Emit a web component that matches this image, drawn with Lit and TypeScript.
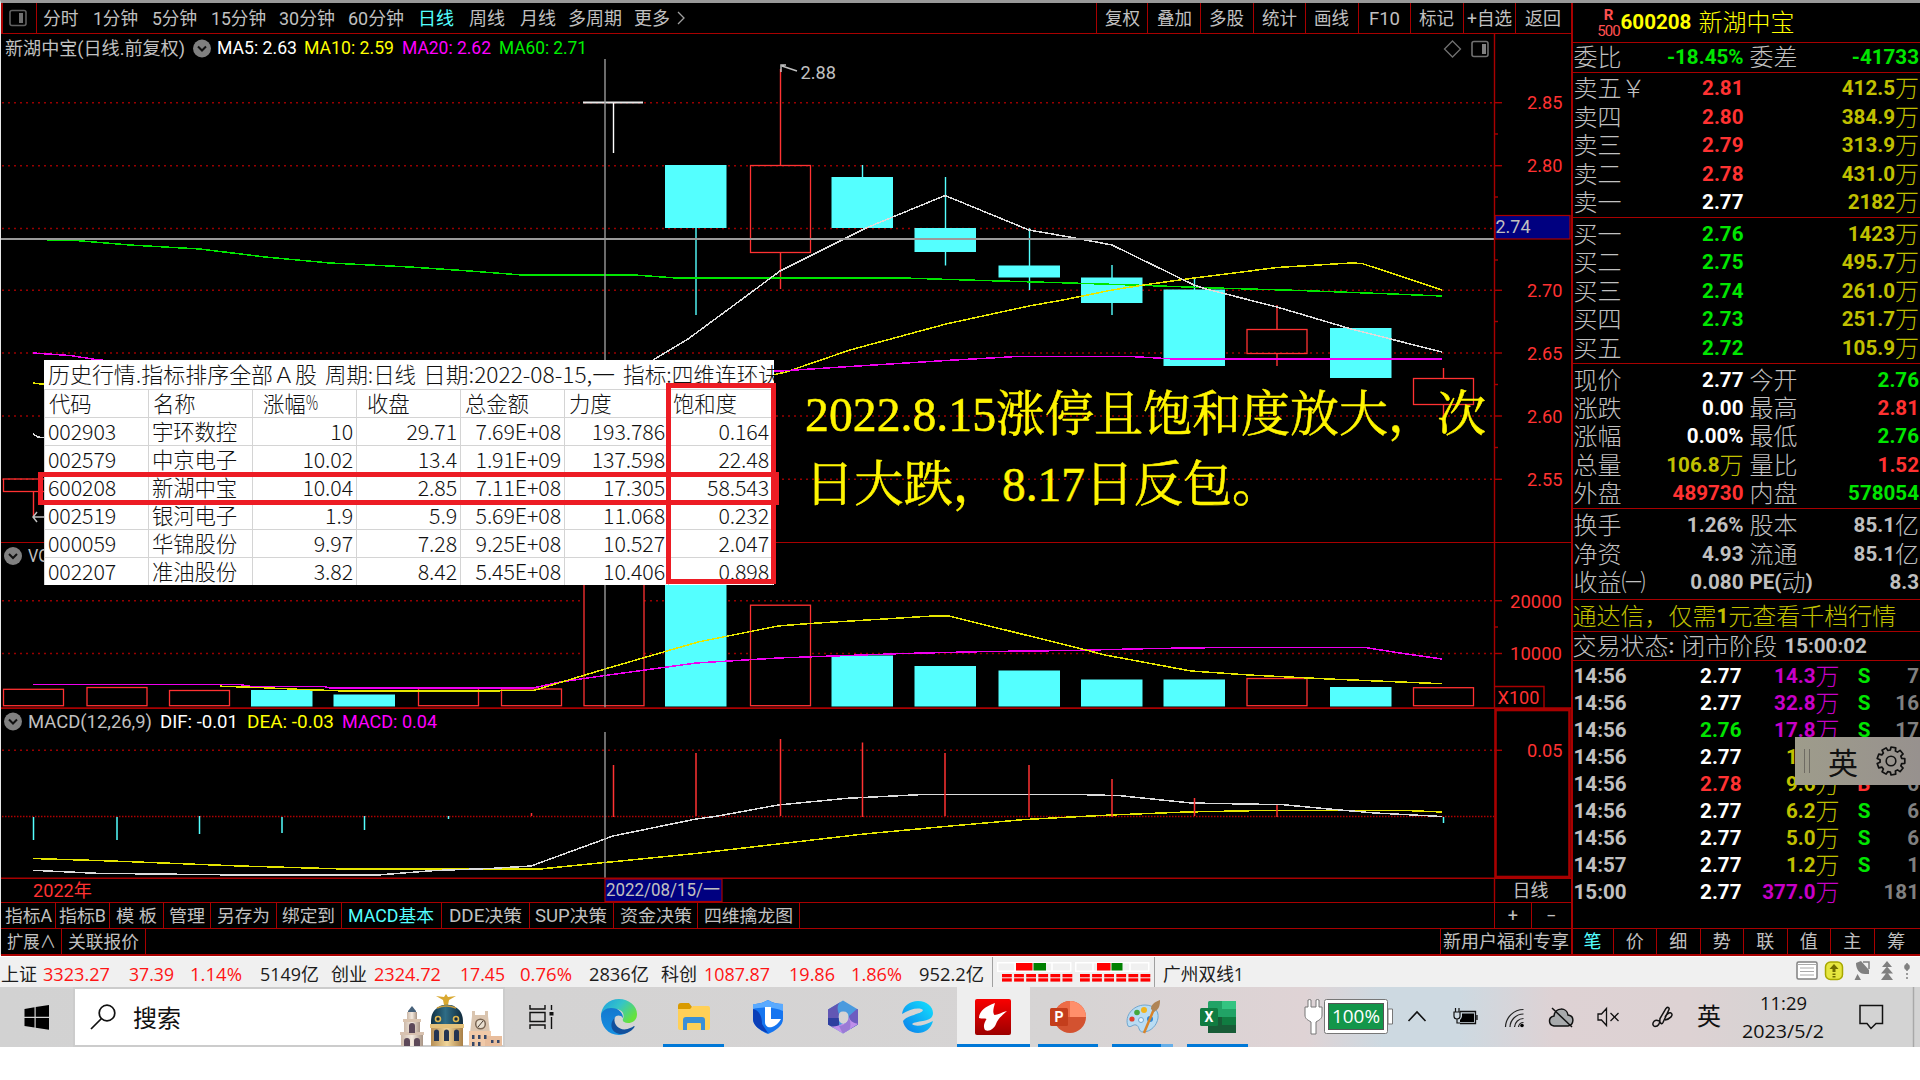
import { LitElement, html, svg, css, nothing } from "lit";
import { customElement } from "lit/decorators.js";

type Pt = [number, number];

const fit = (s: string, w: number, size = 18, cls = "") => html`
  <svg class="fit ${cls}" width=${w} height=${size + 6}>
    <text x="0" y=${size * 0.87 + 3} font-size=${size} textLength=${w} lengthAdjust="spacingAndGlyphs">${s}</text>
  </svg>`;

const t = (x: number, y: number, s: string, w: number, fill: string, size = 18) => svg`
  <text x=${x} y=${y} font-size=${size} fill=${fill} textLength=${w} lengthAdjust="spacingAndGlyphs">${s}</text>`;

const line = (pts: Pt[], color: string) =>
  svg`<polyline points=${pts.map((p) => p.join(",")).join(" ")} fill="none" stroke=${color} stroke-width="1.5" shape-rendering="crispEdges" />`;

const seg = (x1: number, y1: number, x2: number, y2: number, color: string, w = 1.4) =>
  svg`<line x1=${x1} y1=${y1} x2=${x2} y2=${y2} stroke=${color} stroke-width=${w} />`;

const RED = "#ff3232", CYAN = "#54ffff", FRAME = "#a80000", GREY = "#c0c0c0", CROSS = "#9a9a9a";
const YEL = "#e6e600", MAG = "#f000f0", GRN = "#00e600", WHT = "#dcdcdc";

const grid = (y: number) => svg`<line x1="2" x2="1494" y1=${y} y2=${y} class="dots" />`;
const tick = (y: number, w = 8) => seg(1494, y, 1494 + w, y, FRAME);

interface Candle { x: number; top: number; bottom: number; high: number; low: number; up?: boolean }
const CANDLES: Candle[] = [
  { x: 33.5, top: 479, bottom: 491.5, high: 479, low: 516, up: true },
  { x: 696, top: 165, bottom: 228, high: 165, low: 315 },
  { x: 780.5, top: 165.5, bottom: 252.5, high: 69, low: 289, up: true },
  { x: 862.5, top: 177, bottom: 228, high: 165, low: 228 },
  { x: 945.5, top: 228, bottom: 252, high: 177, low: 265.5 },
  { x: 1029.5, top: 265.5, bottom: 277.5, high: 228, low: 290 },
  { x: 1112, top: 277.5, bottom: 303, high: 265, low: 315 },
  { x: 1194.5, top: 289.5, bottom: 366, high: 278, low: 366 },
  { x: 1277, top: 329.5, bottom: 353.5, high: 305, low: 366, up: true },
  { x: 1361, top: 328, bottom: 378, high: 328, low: 378 },
  { x: 1443.5, top: 378.5, bottom: 404.5, high: 368, low: 427, up: true },
];
const candle = (c: Candle) => c.up
  ? svg`${seg(c.x, c.high, c.x, c.top, RED)}${seg(c.x, c.bottom, c.x, c.low, RED)}
      <rect x=${c.x - 30} y=${c.top} width="60" height=${c.bottom - c.top} fill="none" stroke=${RED} stroke-width="1.3" />`
  : svg`${seg(c.x, c.high, c.x, c.low, CYAN)}
      <rect x=${c.x - 31} y=${c.top} width="61.5" height=${c.bottom - c.top} fill=${CYAN} />`;

const VOLUMES: [number, number, boolean][] = [
  [33.5, 689.3, true], [117, 687.5, true], [199.5, 690.5, true], [282, 690, false], [364.5, 694.5, false],
  [448.5, 688.5, true], [531.5, 689, true], [614, 560, true], [696, 548, false], [780.5, 605.2, true],
  [862.5, 655.5, false], [945.5, 666, false], [1029.5, 670.5, false], [1112, 679.5, false], [1194.5, 679.5, false],
  [1277, 678.5, true], [1361, 687, false], [1443.5, 687.7, true],
];

const BARS: [number, number, number, boolean][] = [
  [33.5, 817, 840, false], [117, 817, 840, false], [199.5, 816, 834, false], [282, 817, 833, false],
  [364.5, 816, 830, false], [448.5, 816, 819, false], [531.5, 813, 816, true], [613.5, 765, 817, true],
  [696, 753, 816, true], [780.5, 739, 816, true], [862.5, 742.5, 817, true], [945, 753, 816, true],
  [1029, 765, 817, true], [1112, 779, 817, true], [1194.5, 798, 816, true], [1277, 805, 817, true], [1443.5, 817, 823, false],
];

const dropdown = (x: number, y: number) => svg`
  <circle cx=${x} cy=${y} r="9" fill="#808080" />
  <path d="M${x - 4} ${y - 2}l4 4 4-4" fill="none" stroke="#101010" stroke-width="2" />`;

const periods: [string, number, number][] = [
  ["分时", 35.5, 14], ["1分钟", 45, 14], ["5分钟", 45, 14], ["15分钟", 55, 13.5], ["30分钟", 56, 13], ["60分钟", 56, 13.5],
  ["日线", 36, 15], ["周线", 36, 15], ["月线", 36, 12.5], ["多周期", 54, 12], ["更多", 36, 0],
];
const actions: [string, number, number][] = [
  ["复权", 51, 35], ["叠加", 53, 35], ["多股", 52.5, 35], ["统计", 52.5, 35], ["画线", 52.5, 35],
  ["F10", 52.5, 31], ["标记", 52.5, 35], ["+自选", 52.5, 45], ["返回", 55.5, 36],
];
const tabs: [string, number, number][] = [
  ["指标A", 55, 47], ["指标B", 54, 47], ["模 板", 54, 41], ["管理", 47, 36], ["另存为", 65.5, 53], ["绑定到", 65.5, 53],
  ["MACD基本", 99.5, 86], ["DDE决策", 88, 73], ["SUP决策", 84.5, 72], ["资金决策", 84, 72], ["四维擒龙图", 101.5, 89],
];

const book: [string, string, string, string][][] = [
  [["卖五￥", "2.81", "r", "412.5万"], ["卖四", "2.80", "r", "384.9万"], ["卖三", "2.79", "r", "313.9万"], ["卖二", "2.78", "r", "431.0万"], ["卖一", "2.77", "w", "2182万"]],
  [["买一", "2.76", "g", "1423万"], ["买二", "2.75", "g", "495.7万"], ["买三", "2.74", "g", "261.0万"], ["买四", "2.73", "g", "251.7万"], ["买五", "2.72", "g", "105.9万"]],
];
const facts: [string, string, string, string, string, string][][] = [
  [["现价", "2.77", "w", "今开", "2.76", "g"], ["涨跌", "0.00", "w", "最高", "2.81", "r"], ["涨幅", "0.00%", "w", "最低", "2.76", "g"],
   ["总量", "106.8万", "y", "量比", "1.52", "r"], ["外盘", "489730", "r", "内盘", "578054", "g"]],
  [["换手", "1.26%", "s", "股本", "85.1亿", "s"], ["净资", "4.93", "s", "流通", "85.1亿", "s"], ["收益㈠", "0.080", "s", "PE(动)", "8.3", "s"]],
];
const deals: [string, string, string, string, string, string, string][] = [
  ["14:56", "2.77", "w", "14.3万", "m", "S", "7"], ["14:56", "2.77", "w", "32.8万", "m", "S", "16"], ["14:56", "2.76", "g", "17.8万", "m", "S", "17"],
  ["14:56", "2.77", "w", "1.4万", "y", "S", "6"], ["14:56", "2.78", "r", "9.6万", "y", "B", "6"], ["14:56", "2.77", "w", "6.2万", "y", "S", "6"],
  ["14:56", "2.77", "w", "5.0万", "y", "S", "6"], ["14:57", "2.77", "w", "1.2万", "y", "S", "1"], ["15:00", "2.77", "w", "377.0万", "m", "", "181"],
];

/* Digits are set bold and narrow, Chinese units light and large. */
const mixed = (s: string) =>
  s.split(/([\u3000-\u9fff\uff00-\uffef]+)/).filter(Boolean)
    .map((p) => (/[\u3000-\u9fff\uff00-\uffef]/.test(p) ? html`<span class="cn">${p}</span>` : html`<span class="num">${p}</span>`));

const sheet: string[][] = [
  ["002903", "宇环数控", "10", "29.71", "7.69E+08", "193.786", "0.164"],
  ["002579", "中京电子", "10.02", "13.4", "1.91E+09", "137.598", "22.48"],
  ["600208", "新湖中宝", "10.04", "2.85", "7.11E+08", "17.305", "58.543"],
  ["002519", "银河电子", "1.9", "5.9", "5.69E+08", "11.068", "0.232"],
  ["000059", "华锦股份", "9.97", "7.28", "9.25E+08", "10.527", "2.047"],
  ["002207", "准油股份", "3.82", "8.42", "5.45E+08", "10.406", "0.898"],
];

const indices: [string, number, number, boolean][] = [
  ["上证", 36, 6, false], ["3323.27", 67, 19, true], ["37.39", 45, 16, true], ["1.14%", 52, 18, true], ["5149亿", 59, 11.5, false],
  ["创业", 36, 7, false], ["2324.72", 67, 19, true], ["17.45", 45, 15.5, true], ["0.76%", 52, 17, true], ["2836亿", 60, 12, false],
  ["科创", 36, 7, false], ["1087.87", 66, 19, true], ["19.86", 46, 16, true], ["1.86%", 51, 17, true], ["952.2亿", 65, 0, false],
];

@customElement("app-root")
export class AppRoot extends LitElement {
  static styles = css`
    :host { display: block; width: 1920px; height: 1080px; overflow: hidden; background: #fff;
      font-family: Roboto, "Noto Sans CJK SC", sans-serif; font-size: 18px; line-height: 1; color: #c0c0c0; }
    * { box-sizing: border-box; }
    svg { display: block; flex: none; }
    svg text { font-family: Roboto, "Noto Sans CJK SC", sans-serif; font-weight: 400; }
    .fit { overflow: visible; }
    .fit text { fill: currentColor; }
    .window { display: flex; flex-direction: column; height: 955px; border-top: 3px solid #999; border-left: 1px solid #e8e8e8; background: #000; }
    .body { display: grid; grid-template-columns: 1569.5px 1fr; flex: 1; }
    .left { display: flex; flex-direction: column; }
    .bar { display: flex; align-items: center; height: 31px; border-bottom: 1.5px solid #a80000; border-left: 2px solid #a80000; }
    .panelbtn { display: flex; align-items: center; justify-content: center; width: 34px; height: 100%; border-right: 1.5px solid #a80000; padding-right: 3px; }
    .periods { display: flex; flex: 1; padding-left: 6px; align-items: center; }
    .on { color: #54ffff; }
    .cell { display: flex; align-items: center; justify-content: center; height: 100%; border-left: 1.5px solid #a80000; flex: none; }
    .charts { position: relative; height: 868px; }
    .dots { stroke: #980000; stroke-width: 1.4; stroke-dasharray: 2 4; }
    .zero { stroke: #b00000; stroke-width: 1.4; stroke-dasharray: 1.5 1.5; }
    .row { display: flex; height: 26px; border-top: 1.5px solid #a80000; }
    .row .cell { border-left: 0; border-right: 1.5px solid #a80000; }
    .row.ext { height: 28px; border-bottom: 2px solid #a80000; }
    .grow { flex: 1; }

    .side { border-left: 2px solid #a80000; display: flex; flex-direction: column; }
    .stock { display: flex; height: 40px; align-items: center; padding: 0 0 2px 24px; border-bottom: 1.5px solid #a80000; color: #ff0; }
    .badge { width: 24px; color: #ff5050; text-align: center; font-size: 15px; display: flex; flex-direction: column; gap: 1px; align-items: center; font-weight: 700; padding-top: 3px; }
    .badge i { font-style: normal; font-weight: 400; font-size: 15px; letter-spacing: -1px; }
    .num { font: 700 20.6px/26px Roboto, sans-serif; }
    .cn { font: 300 24px/24px "Noto Sans CJK SC", sans-serif; margin-top: -2px; }
    .group { border-bottom: 1.5px solid #a80000; padding: 1.5px 0 0; flex: none; height: 145.6px; }
    .group.top { height: 29.7px; padding: 0; }
    .group.short { height: 91px; }
    .line { display: grid; grid-template-columns: 170px 6px 84px 1fr; height: 28.45px; align-items: center; padding-left: 1px; padding-right: 1px; white-space: nowrap; }
    .line > div, .deal > div { display: flex; align-items: center; }
    .line span { display: flex; align-items: center; }
    .pair { justify-content: space-between; }
    .end { justify-content: flex-end; }
    .r { color: #ff3232; } .g { color: #00e600; } .w { color: #fff; } .y { color: #c0c000; } .m { color: #c800c8; } .s { color: #c0c0c0; }
    .promo { height: 31.7px; display: flex; align-items: center; border-bottom: 1.5px solid #a80000; color: #c0c000; white-space: nowrap; flex: none; }
    .phase { height: 28.7px; display: flex; align-items: center; border-bottom: 1.5px solid #a80000; white-space: nowrap; flex: none; }
    .gap { width: 7px; }
    .deals { padding-top: 1.2px; flex: 1; }
    .deal { display: grid; grid-template-columns: 168px 98px 18px 13px 1fr; height: 27px; padding: 0 1px 0 1px; }
    .deal .side-mark { justify-content: flex-end; }
    .dim { color: #808080; }
    .foot { display: flex; height: 28px; border-top: 1.5px solid #a80000; border-bottom: 2px solid #a80000; }
    .foot div { width: 43.5px; display: flex; align-items: center; justify-content: center; border-right: 1.5px solid #a80000; flex: none; font-weight: 400; }
    .foot div:first-child { width: 41px; }
    .foot div:last-child { border-right: 0; }

    .sheet { position: absolute; left: 43px; top: 326px; width: 730px; height: 225px; background: #fff; color: #111; overflow: hidden;
      font: 300 21.4px/28px "Noto Sans CJK SC", sans-serif; }
    .sheet svg text { font-family: "Noto Sans CJK SC", sans-serif; font-weight: 300; }
    .title { height: 28.5px; display: flex; align-items: center; padding-left: 4px; gap: 7.5px; }
    .cells { display: grid; grid-template-columns: repeat(7, 104px); grid-auto-rows: 28px; border-left: 1.5px solid #d4d4d4; }
    .cells div { border-top: 1.5px solid #d4d4d4; border-right: 1.5px solid #d4d4d4; padding: 0 3px; text-align: right; white-space: nowrap; line-height: 26px; letter-spacing: -0.1px; }
    .cells .l { text-align: left; }
    .cells .h { text-align: left; padding-left: 10px; display: flex; }
    .cells .h0 { padding-left: 4px; }
    .mark { position: absolute; border: 5px solid #ed1c24; }
    .mark-row { left: 37px; top: 438px; width: 741px; height: 33px; }
    .mark-col { left: 665px; top: 348.5px; width: 110px; height: 201.5px; }
    .note { position: absolute; left: 804px; top: 352px; color: #fff500; display: flex; flex-direction: column; gap: 15.5px; }
    .note div { display: flex; }
    .note svg text { font-family: "Liberation Serif", "Noto Serif CJK SC", "Noto Sans CJK SC", serif; stroke: currentColor; stroke-width: 0.5px; }
    .ime { position: absolute; left: 1795px; top: 737px; width: 125px; height: 48px; background: linear-gradient(90deg, #9e9c8b, #97918e); color: #111;
      display: flex; align-items: center; padding-left: 9px; font: 400 30px/48px "Noto Sans CJK SC", sans-serif; }
    .grip { width: 6px; height: 24px; border: solid #6e6b62; border-width: 0 1.5px; margin-right: 18px; }
    .ime svg { margin-left: 18px; }

    .status { height: 32px; background: #f0f0f0; border-top: 2px solid #fff; display: flex; align-items: center; color: #1c1c1c; padding-top: 4px; }
    .status .fit text { font-family: "Open Sans", "Noto Sans CJK SC", sans-serif; font-weight: 400; }
    .up { color: #ff1414; }
    .status .rule { width: 1.5px; height: 30px; background: #a0a0a0; margin-top: -4px; }
    .tools { margin-left: auto; margin-right: 9px; margin-top: -7px; }

    .taskbar { height: 60px; display: flex; background: linear-gradient(90deg, #d2d2d2 0, #d6d4d4 55%, #dfd3d5 68%, #cdd9e1 72%, #cdd9e1 76%, #ded2d4 81%, #ddd2d3 88%, #d3d3d3 95%); color: #111; }
    .start { width: 73px; display: flex; align-items: center; padding-left: 24px; }
    .search { width: 432px; background: #fff; border: 2px solid #ccc; display: flex; align-items: center; padding-left: 15px; }
    .search span { margin: 0 0 0 17px; font: 400 24px/30px "Noto Sans CJK SC", sans-serif; flex: 1; }
    .search .sky { margin: 5px 1px 0 0; }
    .taskview { width: 73px; display: flex; align-items: center; justify-content: center; }
    .app { width: 74.9px; display: flex; align-items: center; justify-content: center; position: relative; flex: none; }
    .app.run::after { content: ""; position: absolute; bottom: 0; left: 7px; right: 7px; height: 3px; background: #0078d7; }
    .app.multi::after { background: linear-gradient(90deg, #0078d7 80%, #66aee8 80%); }
    .app.active { background: #eee; width: 73px; margin: 0 0.95px; }
    .app.active::after { left: 0; right: 0; }
    .tray { margin-left: auto; display: flex; }
    .clock text { font-family: "Open Sans", "Noto Sans CJK SC", sans-serif; font-weight: 400; }
  `;

  private head() {
    return html`<div class="bar">
      <div class="panelbtn"><svg width="18" height="18"><rect x="1" y="1.5" width="16" height="15" rx="2" fill="none" stroke="#606060" stroke-width="1.6"/><rect x="10" y="4" width="4" height="10" fill="#707070"/></svg></div>
      <div class="periods">
        ${periods.map(([s, w, g]) => html`${fit(s, w, 18, s === "日线" ? "on" : "")}<div style="width:${g}px"></div>`)}
        <svg width="18" height="18"><path d="M8 3l6 6-6 6" fill="none" stroke="#a0a0a0" stroke-width="1.3"/></svg>
      </div>
      ${actions.map(([s, w, tw]) => html`<div class="cell" style="width:${w}px">${fit(s, tw)}</div>`)}
    </div>`;
  }

  private price() {
    return html`<svg width="1570" height="509" viewBox="1 34 1570 509">
      ${[102.7, 165.7, 228.5, 290.3, 353, 416, 479.3].map((y) => svg`${grid(y)}${tick(y)}`)}
      ${[134, 197, 260, 321.5, 384.5, 447.5].map((y) => tick(y, 4))}
      ${CANDLES.map(candle)}
      ${seg(583, 102.5, 643, 102.5, "#e8e8e8", 1.8)}${seg(613.5, 103, 613.5, 153, "#fff")}
      ${line([[47, 240], [76, 240.5], [130, 245], [200, 249], [265, 257], [330, 263], [410, 267], [470, 271], [522, 275], [634, 275], [677, 278], [903, 278], [966, 280], [1070, 283], [1132, 285], [1215, 288], [1300, 290.5], [1380, 293.5], [1442, 296]], GRN)}
      ${line([[33, 383], [50, 385]], YEL)}
      ${line([[768, 376], [786, 372], [850, 350], [946, 324], [1029, 306], [1063, 300], [1112, 290], [1147, 284.5], [1194, 278], [1234, 273], [1277, 267.5], [1351, 263], [1362, 263.5], [1400, 276], [1442, 290]], YEL)}
      ${line([[33, 353], [70, 355.5], [96, 359.5], [110, 361]], MAG)}
      ${line([[768, 371.5], [780, 371], [850, 366.5], [946, 360.5], [1017, 356.5], [1131, 356.5], [1174, 359], [1442, 359]], MAG)}
      ${line([[653, 360], [688, 339], [741, 300], [780, 271], [866, 228], [945, 195.5], [1029, 230], [1075, 238], [1112, 245], [1194, 285], [1206, 289], [1277, 307], [1351, 329], [1442, 352]], WHT)}
      ${line([[33, 434], [38, 437], [46, 438]], WHT)}
      <path d="M46 517H33M37 512l-4 5 4 5M797 71l-15-5M781 72v-7h5" fill="none" stroke=${GREY} stroke-width="1.5" />
      ${seg(1, 239, 1494, 239, CROSS, 1.8)}${seg(605, 59, 605, 543, CROSS)}
      ${t(800.5, 79, "2.88", 35.5, GREY)}
      <rect x="1495" y="215.5" width="75" height="23.5" fill="#000080" stroke=${FRAME} stroke-width="1.2" />
      ${t(1495.5, 232.5, "2.74", 35, GREY)}
      ${([["2.85", 109], ["2.80", 172], ["2.70", 297], ["2.65", 360], ["2.60", 423], ["2.55", 485.5]] as [string, number][]).map(([s, y]) => t(1527, y, s, 35.5, RED))}
      ${seg(1494.5, 34, 1494.5, 543, FRAME)}${seg(1, 542.8, 1571, 542.8, FRAME, 1.8)}
      ${t(5, 54.5, "新湖中宝(日线.前复权)", 180, GREY)}${dropdown(202, 48.5)}
      ${t(217, 54, "MA5: 2.63", 80, "#fff")}${t(304, 54, "MA10: 2.59", 90, "#ff0")}${t(402, 54, "MA20: 2.62", 89, "#f0f")}${t(499, 54, "MA60: 2.71", 88, "#00f000")}
      <path d="M1452.5 41l8 8-8 8-8-8z" fill="none" stroke="#707070" stroke-width="1.3" />
      <rect x="1472" y="41.5" width="16" height="15" rx="2" fill="none" stroke="#707070" stroke-width="1.6" /><rect x="1482" y="44" width="4" height="10" fill="#808080" />
    </svg>`;
  }

  private volume() {
    return html`<svg width="1570" height="166" viewBox="1 543 1570 166">
      ${[600.7, 653.5].map((y) => svg`${grid(y)}${tick(y)}`)}${tick(627, 4)}
      ${VOLUMES.map(([x, y, up]) => up
        ? svg`<rect x=${x - 30} y=${y} width="60" height=${705.7 - y} fill="#000" stroke=${RED} stroke-width="1.3" />`
        : svg`<rect x=${x - 31} y=${y} width="61.5" height=${706.5 - y} fill=${CYAN} />`)}
      ${line([[33, 684.5], [240, 684.5], [250, 686.3], [323, 686.3], [330, 688], [533, 688], [560, 682], [605, 675.5], [696, 663], [778, 658], [833, 656], [904, 653.5], [988, 651.5], [1070, 650.5], [1154, 648.5], [1237, 647.3], [1364, 647.3], [1400, 653], [1442, 659]], MAG)}
      ${line([[220, 686.2], [263, 687.7], [303, 689.5], [345, 691], [533, 690.7], [605, 669], [698, 642], [778, 626], [810, 623.5], [933, 616], [949, 616], [1082, 649], [1105, 655], [1191, 671], [1249, 675], [1329, 679], [1442, 683.7]], YEL)}
      ${seg(605, 543, 605, 708, CROSS)}
      ${dropdown(13, 556)}${t(28, 562, "VOL", 30, GREY)}
      ${t(1510, 607.5, "20000", 52, RED)}${t(1510, 660, "10000", 52, RED)}
      <path d="M1494 686.5H1544V708" fill="none" stroke=${FRAME} stroke-width="1.4" />
      ${t(1497.5, 703.5, "X100", 42, RED)}
      ${seg(1494.5, 543, 1494.5, 709, FRAME)}${seg(1, 708.2, 1571, 708.2, FRAME, 2)}
    </svg>`;
  }

  private macd() {
    return html`<svg width="1570" height="193" viewBox="1 709 1570 193">
      ${grid(750.3)}<line x1="2" x2="1494" y1="816.5" y2="816.5" class="zero" />
      ${line([[33, 858.5], [97, 860.5], [138, 862], [240, 866], [345, 869], [540, 869], [600, 863], [696, 853.5], [778, 844], [864, 834], [945, 826.5], [1025, 819.5], [1071, 817], [1111, 815], [1186, 812], [1272, 810.3], [1401, 810.3], [1442, 812]], YEL)}
      ${line([[33, 870.3], [97, 873.3], [240, 875], [378, 875], [435, 870.5], [490, 868.5], [531, 866], [605, 839], [613, 836], [696, 819], [715, 816.5], [778, 805], [847, 798.3], [927, 794.3], [1071, 794.3], [1120, 795.7], [1191, 803], [1283, 804.7], [1329, 809], [1375, 813], [1442, 816.5]], WHT)}
      ${BARS.map(([x, a, b, up]) => seg(x, a, x, b, up ? RED : CYAN, 1.5))}
      ${seg(605, 732, 605, 878, CROSS)}
      ${dropdown(13, 721.5)}
      ${t(28, 727.5, "MACD(12,26,9)", 124, GREY)}${t(160, 727.5, "DIF: -0.01", 78, "#fff")}${t(247, 727.5, "DEA: -0.03", 87, "#ff0")}${t(342, 727.5, "MACD: 0.04", 95, "#f0f")}
      <rect x="1495.5" y="710" width="74" height="167" fill="none" stroke=${FRAME} stroke-width="2.6" />
      ${tick(750.3)}${t(1527, 757, "0.05", 35.5, RED)}
      ${seg(1, 878.3, 1571, 878.3, FRAME, 1.6)}${seg(1494.5, 878, 1494.5, 902, FRAME)}
      ${t(33, 897, "2022年", 59, RED)}
      <rect x="605" y="879" width="117" height="22.5" fill="#000080" stroke=${FRAME} stroke-width="1.2" />
      ${t(606, 895.5, "2022/08/15/一", 114, GREY)}
      ${t(1512.5, 896.5, "日线", 36, GREY)}
    </svg>`;
  }

  private overlay() {
    return html`<div class="sheet">
        <div class="title">${fit("历史行情.指标排序全部Ａ股", 269, 21.4)}${fit("周期:日线", 91, 21.4)}${fit("日期:2022-08-15,一", 192, 21.4)}${fit("指标:四维连环诀", 157, 21.4)}</div>
        <div class="cells">
          ${["代码", "名称", "涨幅%", "收盘", "总金额", "力度", "饱和度"].map((s, i) => html`<div class="h ${[0, 1, 4, 5, 6].includes(i) ? "h0" : ""}">${i === 2 ? html`涨幅${fit("%", 12, 20)}` : s}</div>`)}
          ${sheet.flatMap((r) => r.map((c, i) => html`<div class=${i < 2 ? "l" : ""}>${c}</div>`))}
        </div>
      </div>
      <div class="mark mark-col"></div><div class="mark mark-row"></div>
      <div class="note">
        <div>${fit("2022.8.15", 191, 48.5)}${fit("涨停且饱和度放大，次", 490, 48.5)}</div>
        <div>${fit("日大跌，", 197, 48.5)}${fit("8.17", 83, 48.5)}${fit("日反包。", 196, 48.5)}</div>
      </div>`;
  }

  private side() {
    return html`<div class="side">
      <div class="stock"><span class="badge">R<i>500</i></span><span class="num">600208</span><span class="gap"></span><span class="cn">新湖中宝</span></div>
      <div class="group top"><div class="line"><div class="pair"><span class="cn">委比</span><span class="num g">-18.45%</span></div><i></i><div class="cn">委差</div><div class="end num g">-41733</div></div></div>
      ${book.map((g) => html`<div class="group">${g.map(([a, p, c, v]) => html`<div class="line"><div class="pair"><span class="cn">${a}</span><span class="num ${c}">${p}</span></div><i></i><i></i><div class="end y">${mixed(v)}</div></div>`)}</div>`)}
      ${facts.map((g, k) => html`<div class="group ${k ? "short" : ""}">${g.map(([a, p, c, b, q, d]) => html`<div class="line"><div class="pair"><span class="cn">${a}</span><span class=${c}>${mixed(p)}</span></div><i></i><div>${mixed(b)}</div><div class="end ${d}">${mixed(q)}</div></div>`)}</div>`)}
      <div class="promo">${mixed("通达信，仅需1元查看千档行情")}</div>
      <div class="phase">${mixed("交易状态:")}<span class="gap"></span>${mixed("闭市阶段")}<span class="gap"></span>${mixed("15:00:02")}</div>
      <div class="deals">${deals.map(([a, p, c, v, vc, s, n]) => html`<div class="deal"><div class="pair"><span class="num">${a}</span><span class="num ${c}">${p}</span></div><div class="end ${vc}">${mixed(v)}</div><i></i><div class="side-mark num ${s === "B" ? "r" : "g"}">${s || nothing}</div><div class="end num dim">${n}</div></div>`)}</div>
      <div class="foot">${["笔", "价", "细", "势", "联", "值", "主", "筹"].map((s, i) => html`<div class=${i ? "" : "on"}>${s}</div>`)}</div>
    </div>`;
  }

  private leds(rx: number, rw: number, gw: number) {
    return svg`
      <rect x="0.7" y="0.7" width="73" height="8.5" fill="#f0f0f0" stroke="#fff" stroke-width="1.5" />
      <path d="M18 0v9M55 0v9" stroke="#fff" stroke-width="1.5" />
      <rect x=${rx} y="1" width=${rw} height="7.5" fill="#f00" /><rect x=${rx + rw + 1} y="1" width=${gw} height="7.5" fill="#008000" />
      ${[0, 1, 2, 3, 4, 5].map((i) => svg`<rect x=${5 + i * 12.1} y="12" width="9.8" height="3.3" fill="#f00" /><rect x=${5 + i * 12.1} y="16.3" width="9.8" height="3.3" fill="#f00" />`)}`;
  }

  private status() {
    return html`<div class="status">
      <div style="width:1px"></div>
      ${indices.map(([s, w, g, up]) => html`${fit(s, w, 18, up ? "up" : "")}<div style="width:${g}px"></div>`)}
      <div style="width:7.500px"></div><div class="rule"></div><div style="width:3.500px"></div>
      <svg width="154" height="20" style="margin-top:-5px">${this.leds(19, 16.5, 12.5)}<g transform="translate(78 0)">${this.leds(22, 13.5, 11)}</g></svg>
      <div class="rule" style="margin-left:3px"></div><div style="width:7.500px"></div>${fit("广州双线1", 81, 18)}
      <svg class="tools" width="116" height="21" viewBox="1795 961 116 21">
        <rect x="1797" y="963" width="20" height="17" rx="1.5" fill="#fff" stroke="#808080" stroke-width="1.5"/><path d="M1797 965.5h20M1800 969h14M1800 972.5h14M1800 976h14" stroke="#aaa" stroke-width="1"/>
        <rect x="1825.5" y="963" width="17" height="17.5" rx="5" fill="#e6e640" stroke="#a8a800" stroke-width="1.5"/><path d="M1834 965l-4.5 5h3v3h3v-3h3z M1832.5 974.5h3v1.5h-3zM1832.5 977h3v1.5h-3z" fill="#706c00"/>
        <path d="M1856 964l5-2 8 9v4h-4c-6 0-9-5-9-11zM1854.500 981l3-6 3.500 6z" fill="#808080"/><path d="M1863 963h6v7" fill="none" stroke="#808080" stroke-width="1.500"/>
        <path d="M1887 962l5 6h-10zM1887 967.500l6 7h-12zM1887 973l6 8h-12z" fill="#808080"/>
        <path d="M1907 964v8M1907 974v2M1907 978v2" stroke="#808080" stroke-width="1.5"/><ellipse cx="1907" cy="968" rx="2.800" ry="3" fill="#808080"/>
      </svg>
    </div>`;
  }

  private skyline() {
    return html`<svg class="sky" width="103" height="53" viewBox="398 994 103 53">
      <defs>
        <linearGradient id="dome" x1="0" x2="1"><stop offset="0" stop-color="#0f2f42"/><stop offset=".45" stop-color="#2f6d86"/><stop offset="1" stop-color="#102a3c"/></linearGradient>
        <linearGradient id="stone" x1="0" x2="1"><stop offset="0" stop-color="#b78f55"/><stop offset=".5" stop-color="#f0d59a"/><stop offset="1" stop-color="#a97f46"/></linearGradient>
        <linearGradient id="pale" x1="0" x2="1"><stop offset="0" stop-color="#cbb8a8"/><stop offset=".5" stop-color="#f5ebe0"/><stop offset="1" stop-color="#a89484"/></linearGradient>
      </defs>
      <path d="M407 1012l4-5 4 5v2h-8z" fill="#47617a"/><rect x="406" y="1013" width="10" height="7" fill="url(#pale)"/><rect x="402" y="1020" width="18" height="3" fill="#d9c3ae"/>
      <rect x="403" y="1023" width="16" height="11" fill="url(#pale)"/><rect x="399" y="1033" width="24" height="3" fill="#d8c2b0"/><rect x="400" y="1036" width="22" height="11" fill="url(#pale)"/>
      <path d="M408 1034v-7a3 3 0 0 1 6 0v7zM403 1047v-5a3 3 0 0 1 6 0v5zM413 1047v-5a3 3 0 0 1 6 0v5z" fill="#5c4858"/>
      <path d="M445 995l2 3 8-1-7 4-1 5h-4l-1-5-7-4 8 1z" fill="#d9a830"/>
      <path d="M438 1008c1-3 15-3 16 0 8 4 8 11 8 17h-32c0-6 0-13 8-17z" fill="url(#dome)"/>
      <path d="M436 1009q9-4 19 0" stroke="#c79b3f" fill="none" stroke-width="1.500"/>
      <circle cx="437" cy="1020" r="2.500" fill="#14283a" stroke="#e0b850" stroke-width="1.600"/><circle cx="455" cy="1020" r="2.500" fill="#14283a" stroke="#e0b850" stroke-width="1.600"/>
      <rect x="429" y="1025" width="34" height="4" fill="#e4c27c"/><rect x="430" y="1029" width="32" height="18" fill="url(#stone)"/>
      <path d="M433 1042v-9a2 2 0 0 1 5 0v9zM443 1042v-9a2 2 0 0 1 5 0v9zM453 1042v-9a2 2 0 0 1 5 0v9z" fill="#243552"/>
      <path d="M471 1017v-5h3v4h10v-4h3v5l2 17h-20z" fill="#dac5b0"/><circle cx="479.500" cy="1025" r="4.800" fill="#e9dfd0" stroke="#796553" stroke-width="1.500"/><path d="M477 1028l5-6" stroke="#453830"/>
      <rect x="468" y="1032" width="22" height="15" fill="#f0c9a8"/><path d="M484 1037h17v10h-17z" fill="#e8bd9c"/>
      <path d="M471 1036h2.500v4h-2.500zM477 1036h2.500v4h-2.500zM483 1036h2.500v4h-2.500zM471 1043h2.500v4h-2.500zM477 1043h2.500v4h-2.500zM490 1041h2.500v3h-2.500zM496 1041h2.500v3h-2.500z" fill="#354768"/>
    </svg>`;
  }

  private taskbar() {
    return html`<div class="taskbar">
      <div class="start"><svg width="25" height="25"><path d="M0.500 4L10.500 2.300V11.700H0.500zM11.700 2.100L25 0V11.700H11.700zM0.500 13H10.500V22.500L0.500 21zM11.700 13H25V24.800L11.700 22.800z" fill="#000"/></svg></div>
      <div class="search"><svg width="26" height="26"><circle cx="17" cy="9" r="7.800" fill="none" stroke="#111" stroke-width="1.700"/><path d="M11.500 14.500L1 25" stroke="#111" stroke-width="1.700"/></svg><span>搜索</span>${this.skyline()}</div>
      <div class="taskview"><svg width="25" height="24"><path d="M1 0v4h15V0M1 24v-4h15v4M1 7.500h15v9H1zM22.500 0v5M22.500 12v12" fill="none" stroke="#111" stroke-width="1.400"/><rect x="20.500" y="7" width="4" height="3.500" fill="#111"/></svg></div>
      <div style="width:3.200px"></div>
      <div class="app"><svg width="38" height="38" viewBox="0 0 38 38">
        <defs><linearGradient id="eg" x1="0" y1="0" x2="1" y2=".6"><stop offset="0" stop-color="#1b9de2"/><stop offset=".5" stop-color="#35c4c8"/><stop offset="1" stop-color="#66e23c"/></linearGradient><linearGradient id="eb" x1="0" y1="0" x2="0" y2="1"><stop offset="0" stop-color="#1478cf"/><stop offset="1" stop-color="#1590e2"/></linearGradient></defs>
        <path d="M1 18C1 8 9 1 19 1s18 7 18 15c0 6-4 9-9 9-4 0-6-2-5-4 2-5-1-10-8-10-8 0-13 4-14 7z" fill="url(#eg)"/>
        <path d="M1 18c0-5 5-8 10-8 8 0 12 5 12 10-3-4-9-3-9 3 0 7 6 12 14 11-3 2-6 3-9 3C8 37 1 28 1 18z" fill="url(#eb)"/>
        <path d="M14.500 20c-1 8 6 13 13 11 4-1 6-3 7-3 1 1-5 8-13 8-10 0-13-10-7-16z" fill="#12509c"/></svg></div>
      <div class="app run"><svg width="34" height="30"><path d="M1 4q0-3 3-3h8l3 4-2 4H1z" fill="#d99a00"/><path d="M1 7h12l3-3h15q2 0 2 2v20q0 2-2 2H3q-2 0-2-2z" fill="#ffd057"/><path d="M6 28V18q0-3 3-3h16q3 0 3 3v10h-4v-6q0-1-1-1H11q-1 0-1 1v6z" fill="#3a8fd6"/></svg></div>
      <div class="app"><svg width="34" height="36"><path d="M17 1c5 3 10 4 15 4v15c0 7-8 12-15 15C10 32 2 27 2 20V5c5 0 10-1 15-4z" fill="#1575f0"/><path d="M17 1c5 3 10 4 15 4v7c-7-3-18-5-30-2V5c5 0 10-1 15-4z" fill="#5aaaff"/><path d="M2 10c6 1 9 7 9 15l6 9C10 32 2 27 2 20z" fill="#0b3fb8"/><path d="M14 8h6v12h10c-2 4-6 7-9 8-4 1-7-1-7-5z" fill="#fff"/></svg></div>
      <div class="app"><svg width="34" height="34">
        <clipPath id="ring"><path clip-rule="evenodd" d="M17 0.500L32 9.500V24.500L17 33.500L2 24.500V9.500zM17.500 11.500q5 0 5 5.500t-5 7q-5-1-5-7t5-5.500z"/></clipPath>
        <g clip-path="url(#ring)"><rect width="34" height="34" fill="#4a9ade"/><path d="M17 0C9 4 12 12 13 14v13L2 25V8z" fill="#6257b4"/><path d="M2 18l11 0 0 8-7 3-4-3z" fill="#2e3fa0"/><path d="M32 8v18l-7 4c-1-5-2-10-2-14z" fill="#6d5cc0"/><path d="M3 26c8 2 15-2 20-9 1 5 6 6 9 7L17 34z" fill="#bf8fea"/><path d="M13 26c5 0 8-4 10-8 2 4 2 9 0 13L17 34z" fill="#9b7bd6"/></g></svg></div>
      <div class="app"><svg width="34" height="34"><defs><linearGradient id="ie" x1="0" y1="1" x2="1" y2="0"><stop offset="0" stop-color="#0b7cea"/><stop offset="1" stop-color="#13e3ff"/></linearGradient></defs><path d="M1 14C2 6 9 1 17 1c9 0 15 6 15 12 0 5-4 7-10 8-5 1-9 1-11 3 3 3 12 2 21-3-2 8-8 12-15 12C9 33 3 28 2 21c2-3 7-5 11-6 4-2 8-2 9-5-4-3-13-1-21 4z" fill="url(#ie)"/></svg></div>
      <div class="app run active"><svg width="36" height="36"><defs><linearGradient id="td" x1="0" y1="0" x2="0" y2="1"><stop offset="0" stop-color="#f90000"/><stop offset="1" stop-color="#9c0000"/></linearGradient></defs><rect width="36" height="36" rx="2" fill="url(#td)"/><path d="M20 4C11 7 4 12 4 19c3 1 6 0 7.500 1C9 24 8 28 10 31c4 2 9-1 11-6 2-5 6-9 11-13-5 1-9 4-12.500 4C17 13 19 8 20 4z" fill="#fff"/></svg></div>
      <div class="app run"><svg width="36" height="34"><circle cx="20" cy="17" r="16" fill="#d35230"/><path d="M20 1a16 16 0 0 1 16 16H20z" fill="#ff8f6b"/><path d="M20 1v16H4A16 16 0 0 1 20 1z" fill="#ed6c47"/><rect y="8" width="18" height="18" rx="1.500" fill="#c43e1c"/><text x="4.500" y="22" font-size="14" fill="#fff" style="font-weight:700">P</text></svg></div>
      <div class="app run multi"><svg width="36" height="36"><path d="M3 27C-1 17 8 6 20 6c9 0 14 6 13 13s-7 14-15 14c-5 0-3-6-7-7-3-1-5 3-8 1z" fill="#b9dcf3" stroke="#6fa6cf"/><circle cx="16" cy="21" r="2.500" fill="#e8f4fc" stroke="#6fa6cf"/><circle cx="7" cy="20" r="2.600" fill="#e04030"/><circle cx="12" cy="13.500" r="2.800" fill="#44a83c"/><circle cx="19" cy="11" r="3" fill="#f0b41c"/><circle cx="25" cy="20" r="3" fill="#2c87d8"/><path d="M19 34L29 10" stroke="#d8842a" stroke-width="2.500"/><path d="M26 10c0-4 2-6 9-9 0 6-1 9-6 12z" fill="#b08455"/></svg></div>
      <div class="app run"><svg width="36" height="34"><rect x="8" y="1" width="28" height="32" rx="1.500" fill="#21a366"/><path d="M22 1h14v8H22z" fill="#33c481"/><path d="M8 17h14v16H8z" fill="#185c37"/><path d="M22 17h14v8H22z" fill="#107c41"/><path d="M22 25h14v8H22z" fill="#185c37"/><rect y="8" width="18" height="18" rx="1.500" fill="#107c41"/><text x="4.500" y="22" font-size="14" fill="#fff" style="font-weight:700">X</text></svg></div>
      <svg class="tray clock" width="630" height="60" viewBox="1290 987 630 60">
        <path d="M1308 1000q2-1 3 0v7h5v-7q1.500-1 3 0v7h3v8c0 4-3 5-6 7v12h-5v-12c-3-2-6-3-6-7v-8h3z" fill="#fff" stroke="#777" stroke-width="1"/>
        <rect x="1324.500" y="999.500" width="63" height="34" rx="2" fill="#fff" stroke="#777"/><path d="M1388 1009h4.500v15h-4.500z" fill="#fff" stroke="#777"/><rect x="1328.500" y="1003.500" width="55" height="26" fill="#13964a" stroke="#555"/>
        ${t(1332, 1022.5, "100%", 48, "#fff", 19)}
        <path d="M1408.500 1021l8.500-9 8.500 9" fill="none" stroke="#111" stroke-width="1.600"/>
        <path d="M1454 1012h6v4q0 3-3 3t-3-3zM1455.500 1008v4M1459 1008v4M1457 1019v4h3" fill="none" stroke="#111" stroke-width="1.200"/><path d="M1460 1011.500h15.500v12h-15.500M1477 1015v5" fill="none" stroke="#111" stroke-width="1.300"/><path d="M1462 1013.500h12v8.500h-14v-2q2-2 2-4z" fill="#000"/>
        <path d="M1505.500 1027a18 18 0 0 1 18-17.500M1510 1027a13.500 13.500 0 0 1 13.500-13M1514.500 1027a9 9 0 0 1 9-8.500M1518.500 1027a5 5 0 0 1 5-4.500" fill="none" stroke="#222" stroke-width="1.200"/><circle cx="1522" cy="1025.500" r="1.800"/>
        <path d="M1554 1026c-6-1-6-9 0-10 1-9 13-9 14-1 7 1 6 10 0 11z" fill="#a8aaac" stroke="#111" stroke-width="1.500"/><path d="M1552 1008l20 19" stroke="#111" stroke-width="1.500"/>
        <path d="M1598 1014h3.500l5-5.500v17l-5-5.500h-3.500zM1610.500 1013l8 8M1618.500 1013l-8 8" fill="none" stroke="#111" stroke-width="1.300"/>
        <path d="M1659 1021c-6-3-8 5-4 5.500 5 0 5-6 5-8l6-10c1-2 4-1 3 1l-6 13c-1 2-3 1-3-1M1665 1020c5-1 9-5 6-7-2-1-5 2-6 4" fill="none" stroke="#111" stroke-width="1.500"/>
        ${t(1697, 1025, "英", 24, "#111", 24)}
        ${t(1760, 1010, "11:29", 47, "#111", 19)}${t(1742, 1038, "2023/5/2", 82, "#111", 19)}
        <path d="M1860 1005.500h22.500v18h-6.500l-5 5-4-5h-7z" fill="none" stroke="#111" stroke-width="1.500"/>
        <path d="M1913.500 987v60" stroke="#a8a8a8" stroke-width="1.500"/>
      </svg>
    </div>`;
  }

  render() {
    const teeth = Array.from({ length: 9 }, (_, i) => {
      const a = (i * 40 * Math.PI) / 180, p = (r: number, d: number) => `${(15 + r * Math.cos(a + d)).toFixed(2)} ${(15 + r * Math.sin(a + d)).toFixed(2)}`;
      return `${i ? "L" : "M"}${p(11, -0.24)}L${p(14, -0.17)}L${p(14, 0.17)}L${p(11, 0.24)}`;
    }).join("") + "Z";
    return html`
      <div class="window"><div class="body">
        <div class="left">
          ${this.head()}
          <div class="charts">${this.price()}${this.volume()}${this.macd()}${this.overlay()}</div>
          <div class="row">${tabs.map(([s, w, tw]) => html`<div class="cell ${s === "MACD基本" ? "on" : ""}" style="width:${w}px">${fit(s, tw, 17.5)}</div>`)}
            <div class="cell grow"></div><div class="cell" style="width:37.500px">+</div><div class="cell" style="width:38.500px;border-right:0">−</div></div>
          <div class="row ext"><div class="cell" style="width:61px">${fit("扩展∧", 49, 17.5)}</div><div class="cell" style="width:83.500px">${fit("关联报价", 71, 17.5)}</div><div class="cell grow"></div><div class="cell" style="width:130px;border-right:0">${fit("新用户福利专享", 126, 17.8)}</div></div>
        </div>
        ${this.side()}
      </div></div>
      ${this.status()}${this.taskbar()}
      <div class="ime"><div class="grip"></div>英<svg width="30" height="30"><path d=${teeth} fill="none" stroke="#111" stroke-width="1.700" stroke-linejoin="round"/><circle cx="15" cy="15" r="4.800" fill="none" stroke="#111" stroke-width="1.600"/></svg></div>`;
  }
}
